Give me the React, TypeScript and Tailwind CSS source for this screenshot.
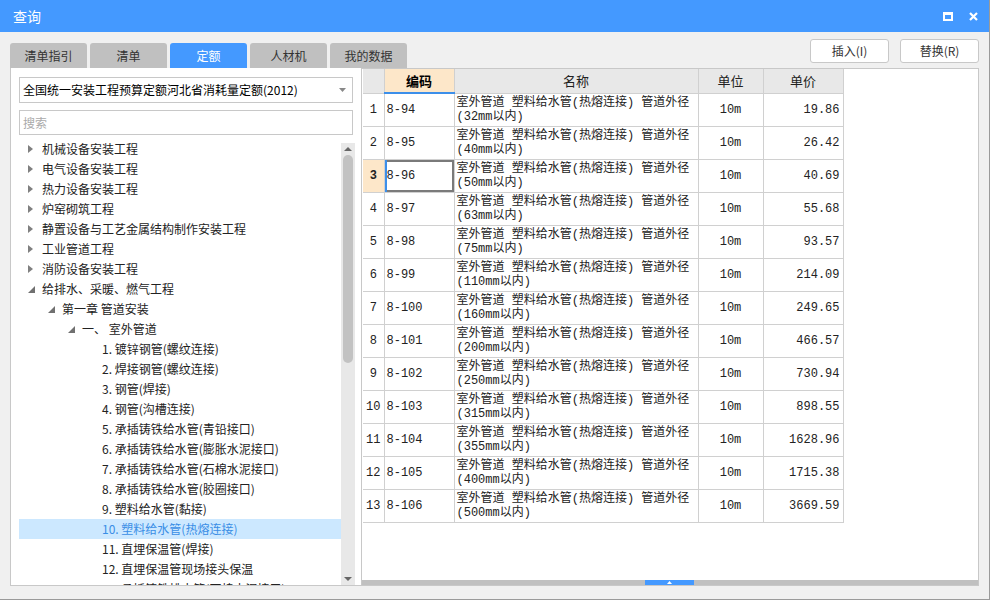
import React from 'react'

const rows = [
  ['8-94', '32', '19.86'],
  ['8-95', '40', '26.42'],
  ['8-96', '50', '40.69'],
  ['8-97', '63', '55.68'],
  ['8-98', '75', '93.57'],
  ['8-99', '110', '214.09'],
  ['8-100', '160', '249.65'],
  ['8-101', '200', '466.57'],
  ['8-102', '250', '730.94'],
  ['8-103', '315', '898.55'],
  ['8-104', '355', '1628.96'],
  ['8-105', '400', '1715.38'],
  ['8-106', '500', '3669.59'],
]

type Node = { label: string; level: number; arrow?: 'closed' | 'open'; selected?: boolean }

const tree: Node[] = [
  { label: '机械设备安装工程', level: 0, arrow: 'closed' },
  { label: '电气设备安装工程', level: 0, arrow: 'closed' },
  { label: '热力设备安装工程', level: 0, arrow: 'closed' },
  { label: '炉窑砌筑工程', level: 0, arrow: 'closed' },
  { label: '静置设备与工艺金属结构制作安装工程', level: 0, arrow: 'closed' },
  { label: '工业管道工程', level: 0, arrow: 'closed' },
  { label: '消防设备安装工程', level: 0, arrow: 'closed' },
  { label: '给排水、采暖、燃气工程', level: 0, arrow: 'open' },
  { label: '第一章 管道安装', level: 1, arrow: 'open' },
  { label: '一、 室外管道', level: 2, arrow: 'open' },
  { label: '1. 镀锌钢管(螺纹连接)', level: 3 },
  { label: '2. 焊接钢管(螺纹连接)', level: 3 },
  { label: '3. 钢管(焊接)', level: 3 },
  { label: '4. 钢管(沟槽连接)', level: 3 },
  { label: '5. 承插铸铁给水管(青铅接口)', level: 3 },
  { label: '6. 承插铸铁给水管(膨胀水泥接口)', level: 3 },
  { label: '7. 承插铸铁给水管(石棉水泥接口)', level: 3 },
  { label: '8. 承插铸铁给水管(胶圈接口)', level: 3 },
  { label: '9. 塑料给水管(黏接)', level: 3 },
  { label: '10. 塑料给水管(热熔连接)', level: 3, selected: true },
  { label: '11. 直埋保温管(焊接)', level: 3 },
  { label: '12. 直埋保温管现场接头保温', level: 3 },
  { label: '13. 承插铸铁排水管(石棉水泥接口)', level: 3 },
]

const indent = ['pl-[9px]', 'pl-[29px]', 'pl-[49px]', 'pl-[69px]']

function Arrow({ kind }: { kind?: 'closed' | 'open' }) {
  if (!kind) return <span className="w-[14px] shrink-0" />
  return (
    <span className="flex w-[14px] shrink-0 items-center">
      {kind === 'closed' ? (
        <svg width="5" height="8" viewBox="0 0 5 8">
          <path d="M0 0 L5 4 L0 8 Z" fill="#808080" />
        </svg>
      ) : (
        <svg width="7" height="7" viewBox="0 0 7 7">
          <path d="M7 0 L7 7 L0 7 Z" fill="#707070" />
        </svg>
      )}
    </span>
  )
}

const tabs = ['清单指引', '清单', '定额', '人材机', '我的数据']
const mono = "font-['Liberation_Mono','Noto_Sans_CJK_SC',monospace]"

export default function App() {
  return (
    <div className="flex h-[600px] w-[990px] flex-col overflow-hidden border-r border-b border-[#9a9a9a] bg-[#f0f0f0] font-['Noto_Sans_CJK_SC',sans-serif] text-[12px] text-[#222]">
      {/* title bar */}
      <div className="flex h-[32px] shrink-0 items-center justify-between bg-[#4499ff] pl-[13px] pr-[11px] text-white">
        <span className="text-[14px]">查询</span>
        <div className="flex items-center gap-[16px]">
          <svg width="10" height="9" viewBox="0 0 10 9">
            <rect x="1" y="1.5" width="8" height="6.5" fill="none" stroke="white" strokeWidth="2" />
            <rect x="0" y="0" width="10" height="3" fill="white" />
          </svg>
          <svg width="9" height="9" viewBox="0 0 9 9">
            <path d="M1 1 L8 8 M8 1 L1 8" stroke="white" strokeWidth="2.2" />
          </svg>
        </div>
      </div>

      <div className="flex flex-1 flex-col px-[10px]">
        {/* tabs + buttons */}
        <div className="flex h-[36px] shrink-0 justify-between">
          <div className="flex items-end gap-[3px]">
            {tabs.map((t) => (
              <div
                key={t}
                className={`flex h-[25px] w-[77px] items-center justify-center rounded-t-[3px] ${
                  t === '定额' ? 'bg-[#4499ff] text-white' : 'bg-[#c0c0c0] text-[#333]'
                }`}
              >
                {t}
              </div>
            ))}
          </div>
          <div className="flex gap-[11px] pt-[7px]">
            {['插入(I)', '替换(R)'].map((b) => (
              <div
                key={b}
                className="flex h-[24px] w-[79px] items-center justify-center rounded-[3px] border border-[#c8c8c8] bg-white text-[#333]"
              >
                {b}
              </div>
            ))}
          </div>
        </div>

        {/* panels */}
        <div className="flex h-[518px] shrink-0">
          {/* left panel */}
          <div className="flex w-[351px] flex-col border-l border-b border-[#c8c8c8] bg-white">
            <div className="mx-[8px] mt-[9px] flex h-[26px] items-center justify-between border border-[#c8c8c8] pl-[3px] pr-[6px] text-[12px] text-black">
              <span>全国统一安装工程预算定额河北省消耗量定额(2012)</span>
              <svg width="7" height="4" viewBox="0 0 7 4">
                <path d="M0 0 L7 0 L3.5 4 Z" fill="#888" />
              </svg>
            </div>
            <div className="mx-[8px] mt-[7px] flex h-[25px] items-center border border-[#c8c8c8] pl-[3px] text-[#aaa]">
              搜索
            </div>
            <div className="mt-[4px] flex min-h-0 flex-1">
              <div className="flex-1 overflow-hidden pl-[8px]">
                {tree.map((n) => (
                  <div
                    key={n.label}
                    className={`flex h-[20px] items-center whitespace-nowrap ${indent[n.level]} ${
                      n.selected ? 'bg-[#cce8ff] text-[#3a8ee6]' : ''
                    }`}
                  >
                    <Arrow kind={n.arrow} />
                    <span>{n.label}</span>
                  </div>
                ))}
              </div>
              {/* vertical scrollbar */}
              <div className="mt-[4px] mr-[6px] flex w-[14px] flex-col items-center bg-[#e8e8e8]">
                <svg className="mt-[4px]" width="8" height="4" viewBox="0 0 8 4">
                  <path d="M0 4 L4 0 L8 4 Z" fill="#666" />
                </svg>
                <div className="mt-[4px] h-[208px] w-[10px] rounded-[5px] bg-[#c2c2c2]" />
                <div className="flex-1" />
                <svg className="mb-[4px]" width="8" height="4" viewBox="0 0 8 4">
                  <path d="M0 0 L8 0 L4 4 Z" fill="#666" />
                </svg>
              </div>
            </div>
          </div>

          {/* right panel */}
          <div className="flex w-[618px] flex-col border border-[#c8c8c8] bg-white">
            <div className="min-h-0 flex-1 overflow-hidden pl-[1px]">
              <table className="border-collapse text-[12px]">
                <thead>
                  <tr className="h-[24px] bg-[#e8e8e8] text-[13px]">
                    <th className="w-[21px] border-r border-b border-[#d0d0d0] p-0" />
                    <th className="w-[70px] border-r border-b-2 border-r-[#d0d0d0] border-b-[#3c8fea] bg-[#fde7c9] p-0 font-bold text-black">
                      编码
                    </th>
                    <th className="w-[244px] border-r border-b border-[#d0d0d0] p-0 font-normal">名称</th>
                    <th className="w-[65px] border-r border-b border-[#d0d0d0] p-0 font-normal">单位</th>
                    <th className="w-[80px] border-r border-b border-[#d0d0d0] p-0 font-normal">单价</th>
                  </tr>
                </thead>
                <tbody>
                  {rows.map(([code, d, price], i) => {
                    const sel = i === 2
                    return (
                      <tr key={code} className="h-[33px]">
                        <td
                          className={`border-r border-b border-[#d0d0d0] p-0 text-center ${mono} ${
                            sel ? 'bg-[#fde7c9] font-bold' : ''
                          }`}
                        >
                          {i + 1}
                        </td>
                        <td
                          className={`border-r border-b border-[#d0d0d0] p-0 pl-[2px] align-middle ${mono} ${
                            sel ? 'shadow-[inset_2px_0_0_#3c8fea,inset_0_2px_0_#7a7a7a,inset_-2px_0_0_#7a7a7a,inset_0_-2px_0_#7a7a7a]' : ''
                          }`}
                        >
                          {code}
                        </td>
                        <td className={`border-r border-b border-[#d0d0d0] p-0 pl-[2px] leading-[14px] whitespace-nowrap ${mono}`}>
                          室外管道 塑料给水管(热熔连接) 管道外径
                          <br />({d}mm以内)
                        </td>
                        <td className={`border-r border-b border-[#d0d0d0] p-0 text-center ${mono}`}>10m</td>
                        <td className={`border-r border-b border-[#d0d0d0] p-0 pr-[3px] text-right ${mono}`}>{price}</td>
                      </tr>
                    )
                  })}
                </tbody>
              </table>
            </div>
            {/* horizontal scrollbar */}
            <div className="flex h-[5px] shrink-0 bg-[#c0c0c0] pl-[283px]">
              <div className="flex h-[5px] w-[49px] items-center justify-center bg-[#4499ff]">
                <svg width="5" height="3" viewBox="0 0 5 3">
                  <path d="M0 3 L2.5 0 L5 3 Z" fill="white" />
                </svg>
              </div>
            </div>
          </div>
        </div>
      </div>
    </div>
  )
}
